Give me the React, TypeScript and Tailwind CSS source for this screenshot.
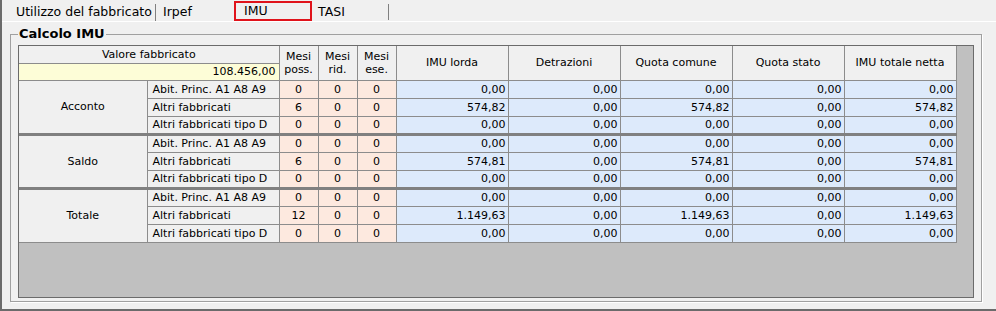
import React from "react";

type Row = [string, number, number, number, string[]];

const zero = ["0,00", "0,00", "0,00", "0,00", "0,00"];

const groups: { label: string; rows: Row[] }[] = [
  {
    label: "Acconto",
    rows: [
      ["Abit. Princ. A1 A8 A9", 0, 0, 0, zero],
      ["Altri fabbricati", 6, 0, 0, ["574,82", "0,00", "574,82", "0,00", "574,82"]],
      ["Altri fabbricati tipo D", 0, 0, 0, zero],
    ],
  },
  {
    label: "Saldo",
    rows: [
      ["Abit. Princ. A1 A8 A9", 0, 0, 0, zero],
      ["Altri fabbricati", 6, 0, 0, ["574,81", "0,00", "574,81", "0,00", "574,81"]],
      ["Altri fabbricati tipo D", 0, 0, 0, zero],
    ],
  },
  {
    label: "Totale",
    rows: [
      ["Abit. Princ. A1 A8 A9", 0, 0, 0, zero],
      ["Altri fabbricati", 12, 0, 0, ["1.149,63", "0,00", "1.149,63", "0,00", "1.149,63"]],
      ["Altri fabbricati tipo D", 0, 0, 0, zero],
    ],
  },
];

const valueHeaders = ["IMU lorda", "Detrazioni", "Quota comune", "Quota stato", "IMU totale netta"];

const cell = "border border-[#8c8c8c] p-0";

const App = () => {
  return (
    <div className="w-[996px] h-[311px] bg-[#f0f0f0] overflow-hidden text-black font-['DejaVu_Sans',Verdana,sans-serif]">
      <div className="h-full flex flex-col border-l-2 border-b-2 border-[#6b6b6b]">
        {/* tab strip */}
        <div className="h-[21px] flex shrink-0 text-[12.5px] leading-none">
          <div className="w-[153px] pl-[14px] pt-[4px] flex items-center whitespace-nowrap">
            Utilizzo del fabbricato
          </div>
          <div className="w-px h-[17px] mt-[4px] bg-[#808080]" />
          <div className="w-[78px] pl-[7px] pt-[4px] flex items-center">Irpef</div>
          <div className="w-[78px] h-[20px] mt-[1px] border-2 border-[#e0131b] pl-[8px] pt-[1px] flex items-center">
            IMU
          </div>
          <div className="w-[76px] pl-[6px] pt-[4px] flex items-center">TASI</div>
          <div className="w-px h-[16px] mt-[4px] bg-[#808080]" />
        </div>

        {/* tab panel */}
        <div className="flex-1 border-t border-white pl-[8px] pt-[4px]">
          <fieldset className="w-[972px] h-[276px] border border-[#a0a0a0] pl-[7px] shadow-[1px_1px_0_#ffffff]">
            <legend className="px-[1px] text-[13px] leading-[16px] font-bold">Calcolo IMU</legend>
            <div className="mt-[3px] w-[956px] h-[253px] border border-[#6b6b6b] bg-[#c0c0c0] text-[11px] leading-none">
              <table className="table-fixed border-collapse w-[937px]">
                <colgroup>
                  <col className="w-[128px]" />
                  <col className="w-[132px]" />
                  <col className="w-[39px]" />
                  <col className="w-[39px]" />
                  <col className="w-[39px]" />
                  <col className="w-[112px]" />
                  <col className="w-[112px]" />
                  <col className="w-[112px]" />
                  <col className="w-[112px]" />
                  <col className="w-[112px]" />
                </colgroup>
                <thead>
                  <tr className="h-[17px]">
                    <th colSpan={2} className={`${cell} border-t-0 border-l-0 bg-[#f0f0f0] font-normal text-center`}>
                      Valore fabbricato
                    </th>
                    {["poss.", "rid.", "ese."].map((m) => (
                      <th
                        key={m}
                        rowSpan={2}
                        className={`${cell} border-t-0 bg-[#f0f0f0] font-normal text-center leading-[13px]`}
                      >
                        Mesi
                        <br />
                        {m}
                      </th>
                    ))}
                    {valueHeaders.map((h) => (
                      <th
                        key={h}
                        rowSpan={2}
                        className={`${cell} border-t-0 bg-[#f0f0f0] font-normal text-center`}
                      >
                        {h}
                      </th>
                    ))}
                  </tr>
                  <tr className="h-[17px]">
                    <td colSpan={2} className={`${cell} border-l-0 bg-[#fdfdd7] text-right pr-[3px]`}>
                      108.456,00
                    </td>
                  </tr>
                </thead>
                <tbody>
                  {groups.map((g, gi) =>
                    g.rows.map((r, ri) => {
                      const sep = ri === 2 && gi < 2 ? "border-b-[3px] border-b-[#808080]" : "";
                      return (
                        <tr key={`${gi}-${ri}`} className="h-[18px]">
                          {ri === 0 && (
                            <td
                              rowSpan={3}
                              className={`${cell} border-l-0 bg-[#f0f0f0] text-center ${
                                gi < 2 ? "border-b-[3px] border-b-[#808080]" : ""
                              }`}
                            >
                              {g.label}
                            </td>
                          )}
                          <td className={`${cell} ${sep} bg-[#f0f0f0] pl-[5px] whitespace-nowrap`}>{r[0]}</td>
                          {[r[1], r[2], r[3]].map((n, ni) => (
                            <td key={ni} className={`${cell} ${sep} bg-[#fde9df] text-center`}>
                              {n}
                            </td>
                          ))}
                          {r[4].map((v, vi) => (
                            <td key={vi} className={`${cell} ${sep} bg-[#ddeafb] text-right pr-[2px]`}>
                              {v}
                            </td>
                          ))}
                        </tr>
                      );
                    })
                  )}
                </tbody>
              </table>
            </div>
          </fieldset>
        </div>
      </div>
    </div>
  );
};

export default App;
